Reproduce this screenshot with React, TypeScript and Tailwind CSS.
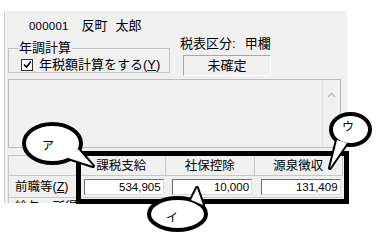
import React from 'react';

const jp = "font-['Liberation_Sans','Noto_Sans_CJK_JP',sans-serif]";

const columns = [
  { title: '課税支給', value: '534,905' },
  { title: '社保控除', value: '10,000' },
  { title: '源泉徴収', value: '131,409' },
];

// speech bubble: tail polygon stroked, ellipse on top, then tail fill again to hide the seam
function Bubble({ cx, cy, rx, ry, tail, label, tx, ty }: {
  cx: number; cy: number; rx: number; ry: number; tail: string; label: string; tx: number; ty: number;
}) {
  return (
    <g>
      <polygon points={tail} fill="white" stroke="black" strokeWidth={4} strokeLinejoin="round" />
      <ellipse cx={cx} cy={cy} rx={rx} ry={ry} fill="white" stroke="black" strokeWidth={4} />
      <polygon points={tail} fill="white" stroke="none" />
      <text x={tx} y={ty} fontSize={12} fontFamily="Noto Sans CJK JP, sans-serif" textAnchor="middle" fill="black">
        {label}
      </text>
    </g>
  );
}

export default function App() {
  return (
    <div className={`relative w-[384px] h-[246px] bg-white overflow-hidden text-[13px] leading-[16px] text-black ${jp}`}>
      <div className="ml-[4px] mt-[11px] w-[343px] h-[192px] bg-[#f0f0f0] border-l border-[#cfcfcf] overflow-hidden flex flex-col">
        {/* employee */}
        <div className="shrink-0 pl-[24px] pt-[7px] h-[23px] flex items-start">
          <span className="text-[11.5px] tracking-[0.2px]">000001</span>
          <span className="ml-[13px]">反町</span>
          <span className="ml-[8px]">太郎</span>
        </div>

        <div className="shrink-0 flex items-start mt-[2px]">
          <fieldset className="ml-[3px] mt-[4px] w-[162px] border border-[#c4c4c4] pb-[2px]">
            <legend className="ml-[9px] px-[1px]">年調計算</legend>
            <div className="pl-[12px] pt-[3px] flex items-center h-[14px]">
              <span className="w-[12px] h-[12px] border border-[#333] bg-white flex items-center justify-center">
                <svg width="9" height="9" viewBox="0 0 9 9">
                  <path d="M1 4.5 L3.5 7 L8 1.5" fill="none" stroke="black" strokeWidth="1.6" />
                </svg>
              </span>
              <span className="ml-[6px]">年税額計算をする(<span className="underline">Y</span>)</span>
            </div>
          </fieldset>

          <div className="ml-[10px] flex flex-col">
            <div className="flex">
              <span>税表区分:</span>
              <span className="ml-[9px]">甲欄</span>
            </div>
            <div className="ml-[3px] mt-[3px] w-[88px] h-[21px] border border-t-[#a8a8a8] border-l-[#a8a8a8] border-b-white border-r-white flex items-center justify-center">
              未確定
            </div>
          </div>
        </div>

        {/* list */}
        <div className="shrink-0 ml-[3px] mt-[3px] w-[333px] h-[69px] border border-[#bcbcbc] flex">
          <div className="flex-1" />
          <div className="w-[18px] border-l border-[#e2e2e2] flex justify-center pt-[12px]">
            <svg width="9" height="6" viewBox="0 0 9 6">
              <path d="M1 5 L4.5 1.5 L8 5" fill="none" stroke="#b8b8b8" strokeWidth="1.3" />
            </svg>
          </div>
        </div>

        {/* grid */}
        <div className="shrink-0 ml-[3px] mt-[7px] w-[335px] border-t border-l border-[#c8c8c8]">
          <div className="flex h-[20px] border-b border-[#c8c8c8]">
            <div className="w-[69px] border-r border-[#c8c8c8]" />
            {columns.map((c) => (
              <div key={c.title} className="w-[89px] border-r border-[#c8c8c8] flex items-center justify-center text-[12.5px]">
                {c.title}
              </div>
            ))}
          </div>
          <div className="flex h-[22px] border-b border-[#c8c8c8] items-center">
            <div className="w-[69px] pl-[6px] text-[12.5px]">
              前職等(<span className="underline">Z</span>)
            </div>
            {columns.map((c) => (
              <div key={c.title} className="w-[89px] pl-[6px] flex items-center">
                <div className="w-[80px] h-[16px] bg-white border border-t-[#6e6e6e] border-l-[#6e6e6e] border-b-[#dadada] border-r-[#dadada] text-right pr-[2px] text-[11.5px] leading-[14px]">
                  {c.value}
                </div>
              </div>
            ))}
          </div>
          <div className="flex h-[20px] pt-[1px]">
            <div className="w-[69px] pl-[6px] text-[12.5px]">給与・所得</div>
          </div>
        </div>
      </div>

      {/* annotations */}
      <svg className="absolute left-0 top-0 pointer-events-none" width="384" height="246" viewBox="0 0 384 246">
        <rect x="78.5" y="153.5" width="268" height="48" fill="none" stroke="black" strokeWidth="5" />
        <Bubble cx={52.5} cy={143.5} rx={28.5} ry={19.5} tail="68,158 78,149 93,166" label="ア" tx={48} ty={150} />
        <Bubble cx={350.5} cy={129.5} rx={19.5} ry={15.5} tail="337,140 347,143 330,168" label="ウ" tx={348} ty={131} />
        <Bubble cx={177.5} cy={214} rx={28.5} ry={16} tail="191,200 203,205 197,188" label="イ" tx={172} ty={222} />
      </svg>
    </div>
  );
}
